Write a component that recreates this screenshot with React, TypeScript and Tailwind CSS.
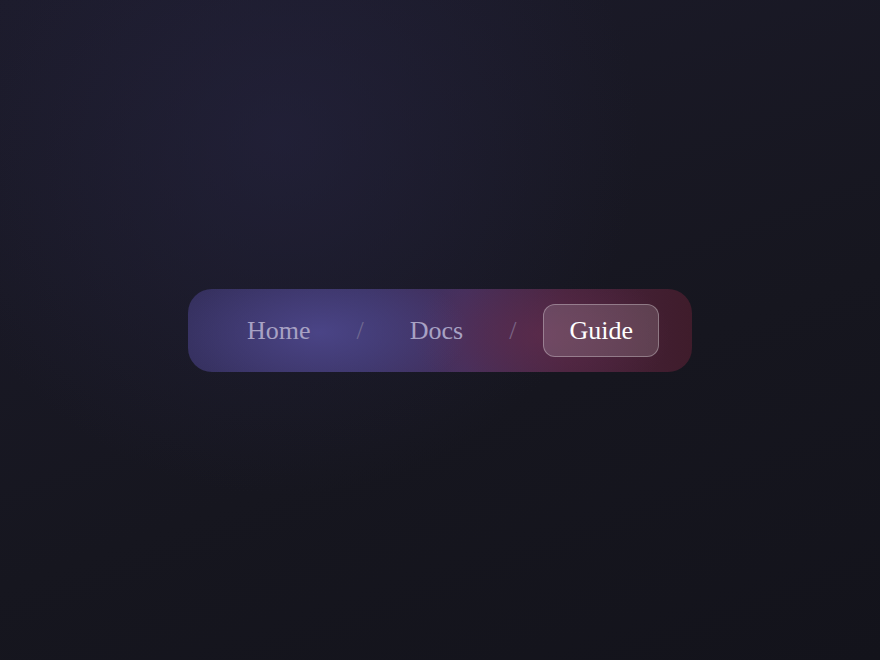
export default function App() {
  return (
    <div className="min-h-screen w-full flex items-center justify-center bg-[radial-gradient(circle_at_32%_21%,rgba(40,38,70,0.5),transparent_45%),linear-gradient(160deg,#1c1b2b_0%,#16161f_60%,#13131b_100%)] font-['Liberation_Serif',serif]">
      <nav className="flex items-center pl-[35px] pr-[33px] py-[15px] rounded-[24px] bg-[radial-gradient(ellipse_150px_70px_at_26%_52%,rgba(76,70,138,0.9),transparent),radial-gradient(ellipse_130px_70px_at_70%_55%,rgba(100,44,76,0.6),transparent),linear-gradient(90deg,#35305e_0%,#3a3262_35%,#45305e_55%,#47243e_75%,#3f1c2b_100%)]">
        <span className="px-6 py-1.5 text-[26px] leading-normal text-[#a8a2c4]">Home</span>
        <span className="mx-[22px] text-[26px] leading-normal text-[#6f6890]">/</span>
        <span className="px-6 py-1.5 text-[26px] leading-normal text-[#a8a2c4]">Docs</span>
        <span className="ml-[22px] mr-[27px] text-[26px] leading-normal text-[#7a6384]">/</span>
        <span className="px-[25px] py-1.5 text-[26px] leading-normal text-white rounded-xl border border-white/30 bg-white/15">
          Guide
        </span>
      </nav>
    </div>
  );
}
